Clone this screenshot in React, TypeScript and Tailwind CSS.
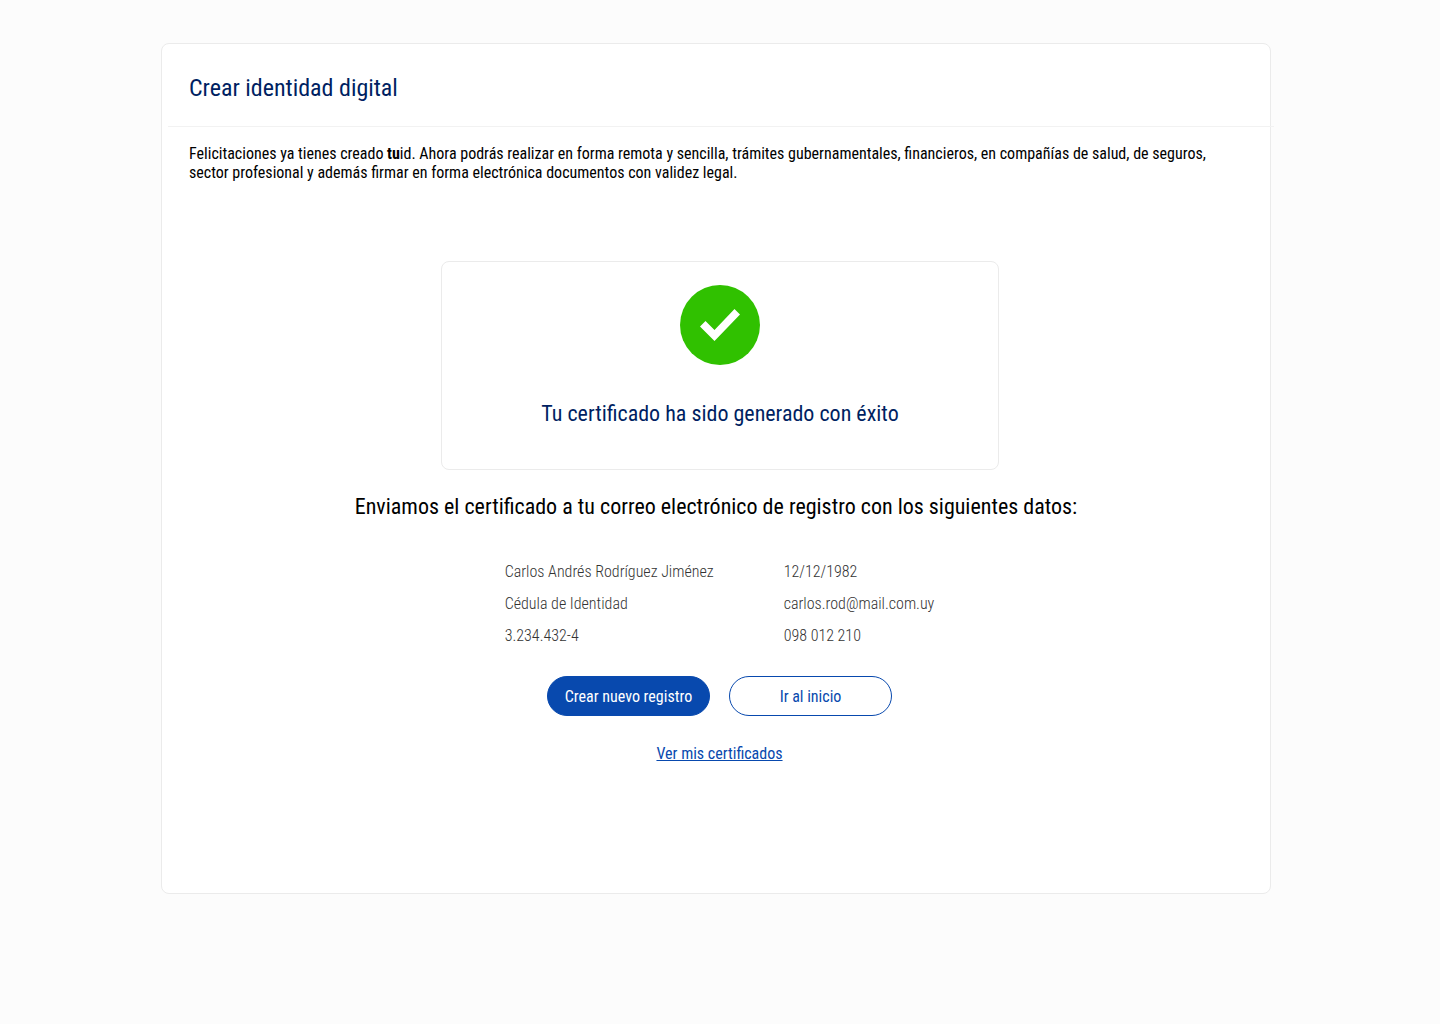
import React from "react";

interface RegistroColumn {
  id: string;
  values: string[];
}

const registro: RegistroColumn[] = [
  {
    id: "persona",
    values: ["Carlos Andrés Rodríguez Jiménez", "Cédula de Identidad", "3.234.432-4"],
  },
  {
    id: "contacto",
    values: ["12/12/1982", "carlos.rod@mail.com.uy", "098 012 210"],
  },
];

function SuccessIcon() {
  return (
    <svg className="h-20 w-20" viewBox="0 0 80 80" aria-hidden="true">
      <circle cx="40" cy="40" r="40" fill="#30c100" />
      <path d="M20 41.5 L25.5 36 L34.5 45 L54.5 24 L60 29.5 L34.5 56 Z" fill="#fff" />
    </svg>
  );
}

export default function App() {
  return (
    <div className="flex min-h-screen items-start justify-center bg-[#fcfcfc] pt-[43px] pr-2 pb-10 font-['Roboto_Condensed','Roboto','Liberation_Sans_Narrow',sans-serif] text-base text-black">
      <main className="w-full max-w-[1110px] rounded-lg border border-[#ebebeb] bg-white pb-[127px]">
        {/* Header */}
        <header className="px-[27px] pt-7 pb-[22px]">
          <h1 className="text-2xl text-[#001f62]">Crear identidad digital</h1>
        </header>
        <hr className="ml-1.5 -mr-1 border-[#f2f2f2]" />

        <p className="px-[27px] pt-[17px] leading-[19px]">
          Felicitaciones ya tienes creado <b>tu</b>id. Ahora podrás realizar en forma remota y
          sencilla, trámites gubernamentales, financieros, en compañías de salud, de seguros,
          sector profesional y además firmar en forma electrónica documentos con validez legal.
        </p>

        {/* Result */}
        <section className="mt-[79px] flex flex-col items-center pl-2">
          <div className="flex w-full max-w-[558px] flex-col items-center rounded-lg border border-[#ebebeb] pt-[23px] pb-[39px]">
            <SuccessIcon />
            <h2 className="mt-[33px] text-[22px] leading-8 text-[#001f62]">
              Tu certificado ha sido generado con éxito
            </h2>
          </div>
        </section>

        <p className="mt-[21px] text-center text-[22px] leading-8">
          Enviamos el certificado a tu correo electrónico de registro con los siguientes datos:
        </p>

        <section className="mt-[33px] flex flex-col items-center pl-[7px]">
          <div className="flex gap-[70px] font-light text-[#333333]">
            {registro.map((column) => (
              <ul key={column.id} className="leading-8">
                {column.values.map((value) => (
                  <li key={value}>{value}</li>
                ))}
              </ul>
            ))}
          </div>

          {/* Actions */}
          <div className="mt-6 flex gap-[19px]">
            <button
              type="button"
              className="h-10 w-[163px] cursor-pointer rounded-full border border-[#0849ae] bg-[#0849ae] pt-0.5 text-white hover:bg-[#063b8e]"
            >
              Crear nuevo registro
            </button>
            <button
              type="button"
              className="h-10 w-[163px] cursor-pointer rounded-full border border-[#0849ae] bg-white pt-0.5 text-[#0849ae] hover:bg-blue-50"
            >
              Ir al inicio
            </button>
          </div>
          <a href="#certificados" className="mt-[26px] text-[#0849ae] underline">
            Ver mis certificados
          </a>
        </section>
      </main>
    </div>
  );
}
